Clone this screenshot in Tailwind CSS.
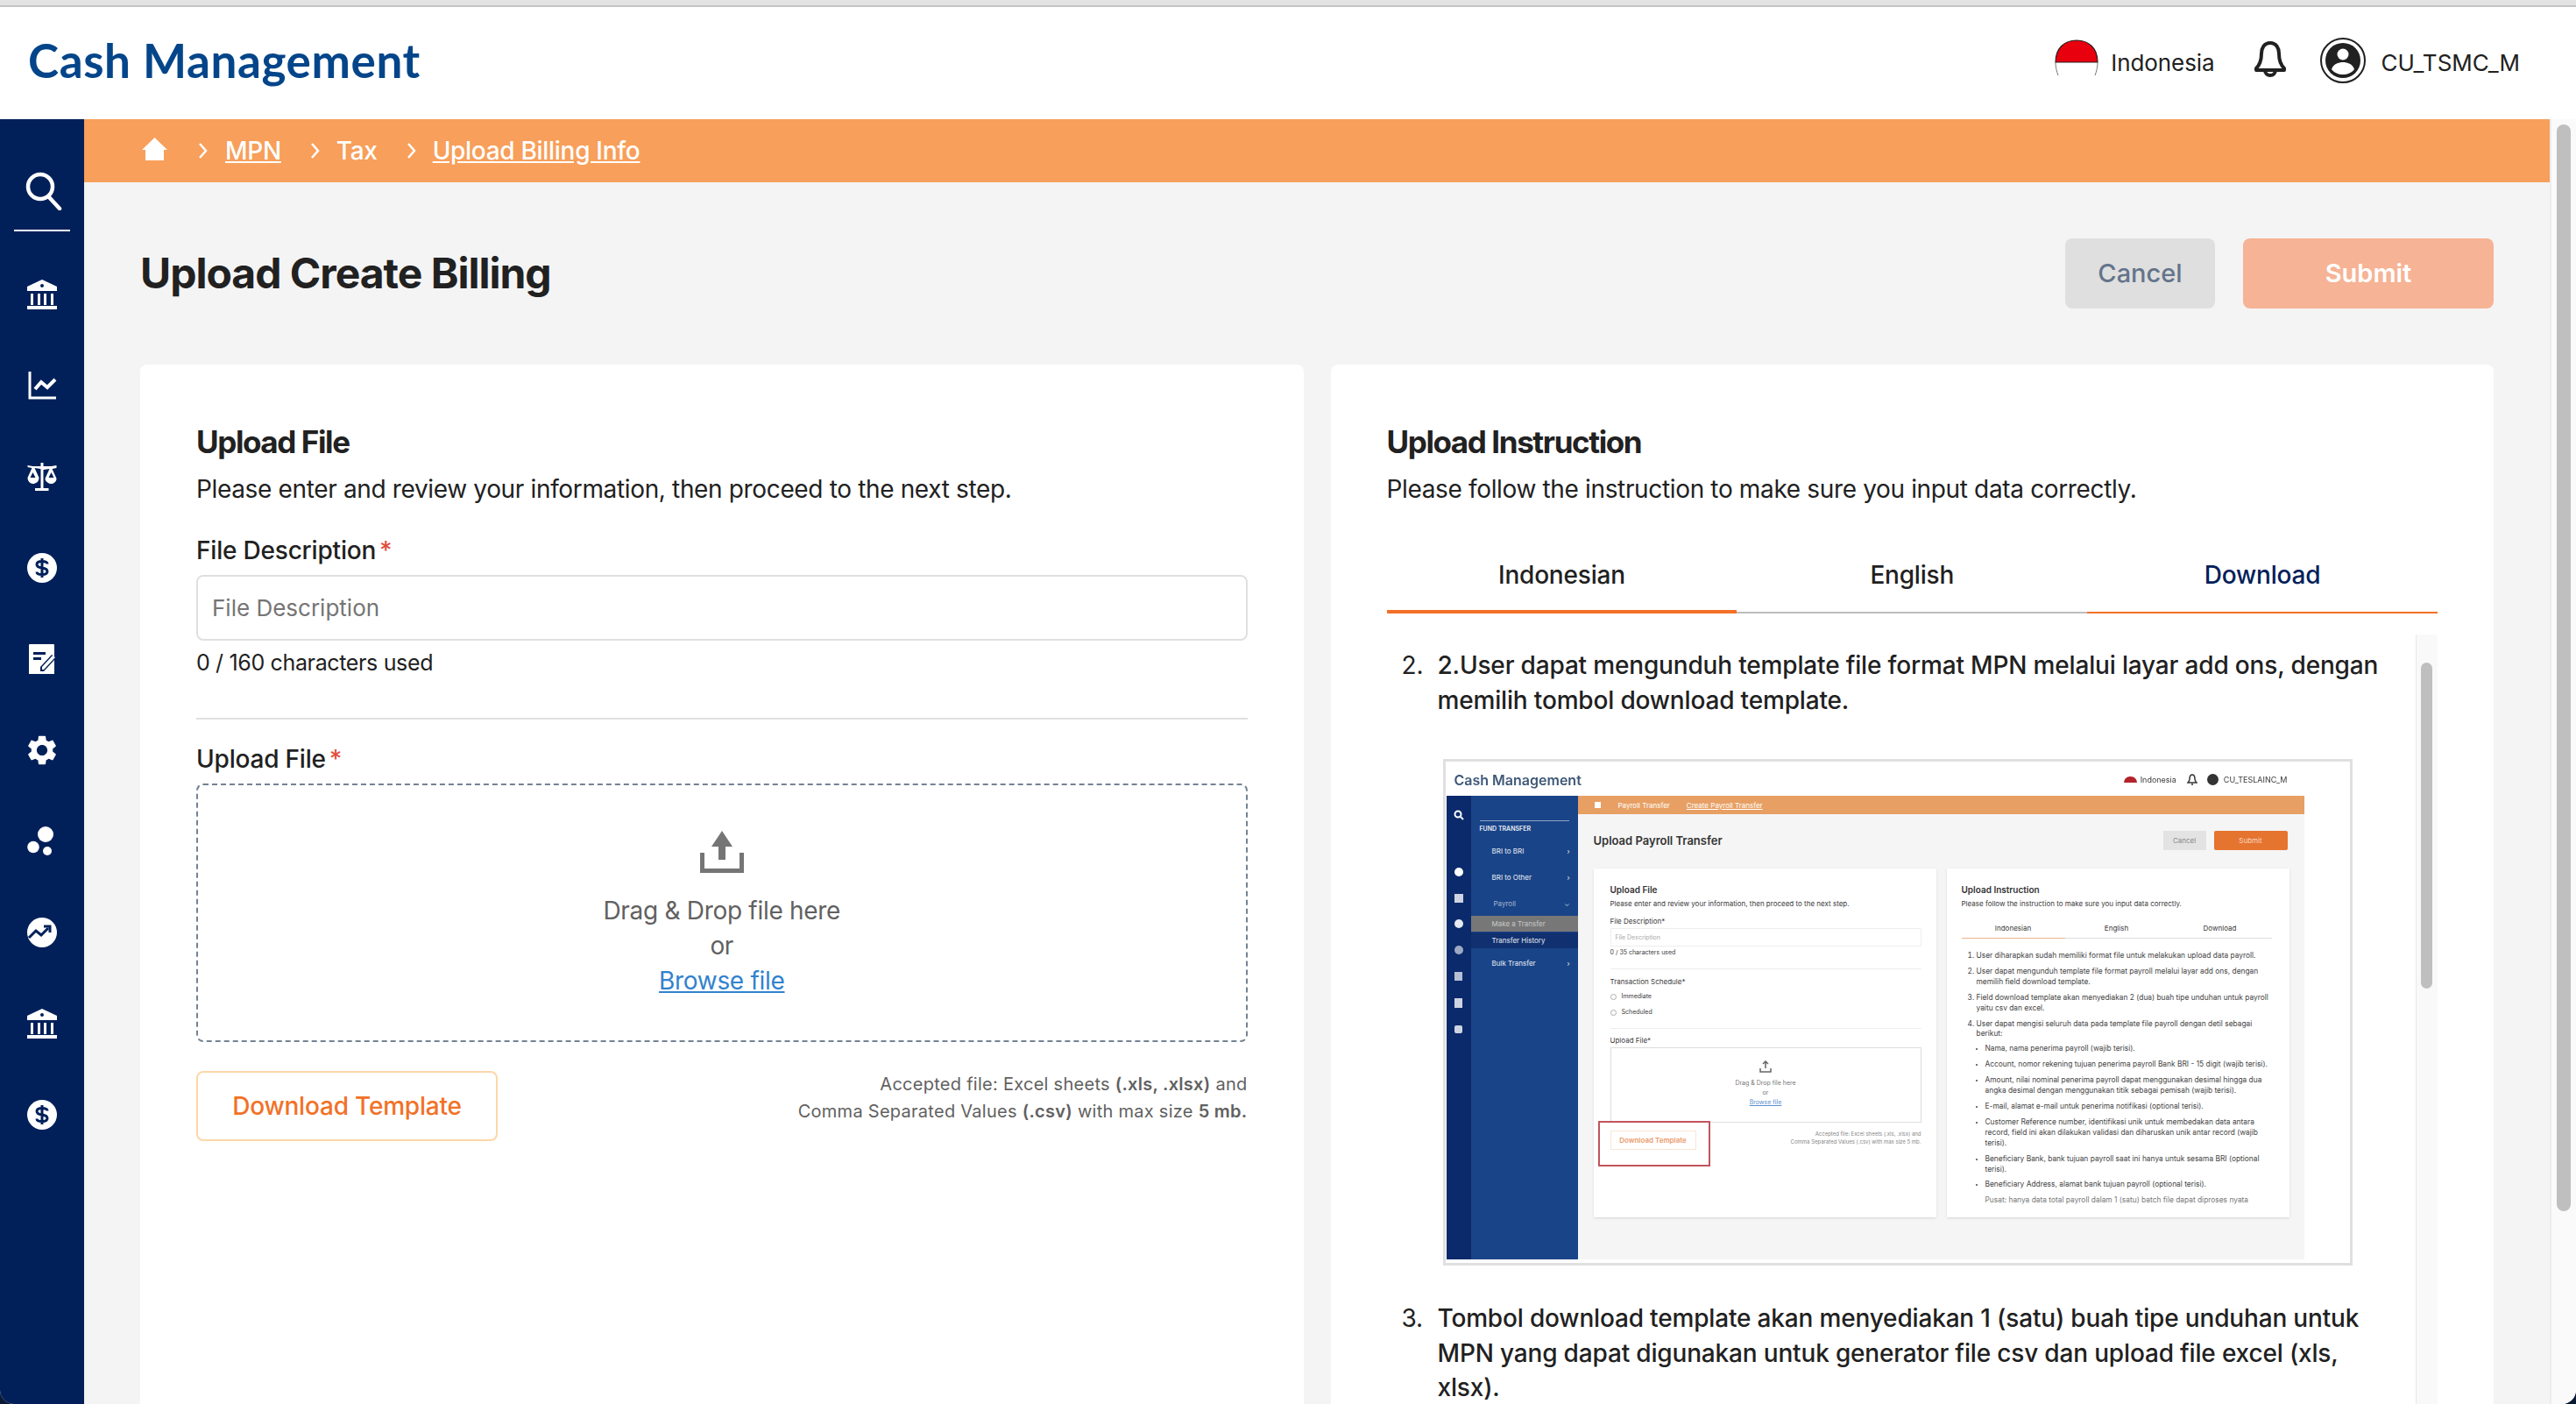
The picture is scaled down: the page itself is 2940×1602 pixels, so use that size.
<!DOCTYPE html>
<html lang="id">
<head>
<meta charset="UTF-8">
<title>Upload Create Billing</title>
<script src="https://cdn.jsdelivr.net/npm/@tailwindcss/browser@4"></script>
</head>
<body class="h-[1602px] overflow-hidden bg-[#0b1a33] [font-family:Inter,sans-serif] text-[#212121]">
<div class="h-[1602px] flex flex-col overflow-hidden rounded-b-[16px] bg-white">
  <!-- browser strip -->
  <div class="h-[8px] bg-[#e3e3e3] border-b-2 border-[#c4c4c4]"></div>

  <!-- header -->
  <header class="h-[128px] bg-white flex items-center pl-[32px] pr-[64px]">
    <div class="[font-family:Lato,sans-serif] text-[53px] font-bold text-[#04458a] leading-none -mt-[8px] tracking-[0.6px]">Cash Management</div>
    <div class="ml-auto flex items-center -mt-[2px]">
      <svg width="50" height="42" viewBox="0 0 50 42" class="-mt-[10px]"><path d="M1 26C1 10 11 1 25 1s24 9 24 25z" fill="#e8000f" stroke="#222" stroke-width="1.2"/><path d="M1 26c0 5 1 10 3 15M49 26c0 5-1 10-3 15" fill="none" stroke="#777" stroke-width="1"/></svg>
      <span class="text-[26px] ml-[14px] tracking-[-0.1px]">Indonesia</span>
      <svg width="38" height="42" viewBox="0 0 38 42" class="ml-[45px] -mt-[8px]" fill="none" stroke="#212121" stroke-width="4" stroke-linejoin="round"><path d="M19 3c-7 0-10 6-10 12 0 8-2 13-6 17v2h32v-2c-4-4-6-9-6-17 0-6-3-12-10-12z"/><path d="M13 34c0 4 3 6 6 6s6-2 6-6"/></svg>
      <svg width="52" height="52" viewBox="0 0 52 52" class="ml-[38px] -mt-[4px]"><circle cx="26" cy="26" r="25" fill="none" stroke="#212121" stroke-width="2"/><circle cx="26" cy="26" r="20" fill="#212121"/><circle cx="26" cy="19" r="6.5" fill="#fff"/><path d="M13 36c2-6 8-8 13-8s11 2 13 8c-3 4-8 6-13 6s-10-2-13-6z" fill="#fff"/></svg>
      <span class="text-[26px] ml-[17px]">CU_TSMC_M</span>
    </div>
  </header>

  <div class="flex-1 flex min-h-0">
    <!-- sidebar -->
    <aside class="w-[96px] shrink-0 bg-[#012059] flex flex-col items-center pt-[60px]">
      <svg width="44" height="44" viewBox="0 0 44 44" fill="none" stroke="#fff" stroke-width="4.5" stroke-linecap="round" class="ml-[5px]"><circle cx="17" cy="17" r="14"/><path d="M27 29l12 13"/></svg>
      <div class="w-[64px] h-[2px] bg-white mt-[22px] mb-[55px]"></div>
      <div class="flex flex-col gap-[70px]">
        <svg width="34" height="34" viewBox="0 0 34 34" fill="#fff"><path fill-rule="evenodd" d="M17 0L34 8v5H0V8zM17 5a2 2 0 100 4 2 2 0 000-4z"/><path d="M4 16h3v13H4zM12 16h3v13h-3zM19 16h3v13h-3zM27 16h3v13h-3zM0 30h34v4H0z"/></svg>
        <svg width="34" height="34" viewBox="0 0 34 34" fill="none" stroke="#fff"><path d="M3 1v30h30" stroke-width="3"/><path d="M9 21l7-8 7 6 9-9" stroke-width="4"/></svg>
        <svg width="34" height="34" viewBox="0 0 34 34"><path d="M15.500 1h3v4l9 0 6-1v3l-5 1 5 11c0 4-4 6-6 6s-7-2-7-6l5-11-7 1v21h6v3H9v-3h6.500V8l-7-1 5 11c0 5-4 7-7 7s-6-3-6-7l5-11-5-1V4l6 1 9 0z" fill="#fff"/><path d="M6.500 12l-3 6h6zM27.500 12l-3 6h6z" fill="#012059"/></svg>
        <svg width="34" height="34" viewBox="0 0 34 34"><circle cx="17" cy="17" r="17" fill="#fff"/><path d="M23 12.500c0-2-2-3-6-3s-6 1-6 3.500 2 3.500 6 4 6 1.500 6 4-2 3.500-6 3.500-6-1-6-3M17 6v22" fill="none" stroke="#012059" stroke-width="3"/></svg>
        <svg width="34" height="34" viewBox="0 0 34 34"><path d="M3 0h27a1 1 0 011 1v34H3a1 1 0 01-1-1V1a1 1 0 011-1z" fill="#fff"/><path d="M7 9h14v3H7zM7 15h9v3H7z" fill="#012059"/><path d="M15 31v-5L28 12l5 4-14 15z" fill="#012059"/><path d="M17 29v-3L29 13l3 2-13 14z" fill="#fff"/></svg>
        <svg width="34" height="34" viewBox="2.400 2 19.200 20" fill="#fff"><path d="M19.140 12.940c.04-.3.06-.61.06-.94 0-.32-.02-.64-.07-.94l2.030-1.580c.18-.14.23-.41.12-.61l-1.920-3.320c-.12-.22-.37-.29-.59-.22l-2.390.96c-.5-.38-1.030-.7-1.620-.94l-.36-2.540c-.04-.24-.24-.41-.48-.41h-3.840c-.24 0-.43.17-.47.41l-.36 2.540c-.59.24-1.130.57-1.620.94l-2.390-.96c-.22-.08-.47 0-.59.22L2.740 8.870c-.12.21-.08.47.12.61l2.030 1.580c-.05.3-.09.63-.09.94s.02.64.07.94l-2.030 1.580c-.18.14-.23.41-.12.61l1.920 3.320c.12.22.37.29.59.22l2.390-.96c.5.38 1.030.7 1.620.94l.36 2.540c.05.24.24.41.48.41h3.840c.24 0 .44-.17.47-.41l.36-2.540c.59-.24 1.130-.56 1.620-.94l2.390.96c.22.08.47 0 .59-.22l1.920-3.320c.12-.22.07-.47-.12-.61l-2.010-1.580zM12 15.600c-1.980 0-3.600-1.620-3.600-3.600s1.620-3.600 3.600-3.600 3.600 1.620 3.600 3.600-1.620 3.600-3.600 3.600z"/></svg>
        <svg width="34" height="34" viewBox="0 0 34 34" fill="#fff"><circle cx="21" cy="9" r="9"/><circle cx="7" cy="23.500" r="6.800"/><circle cx="23" cy="28" r="5"/></svg>
        <svg width="34" height="34" viewBox="0 0 34 34"><circle cx="17" cy="17" r="17" fill="#fff"/><path d="M2 23l8-8 6 5 8-8" fill="none" stroke="#012059" stroke-width="3"/><path d="M19 10h7v7" fill="none" stroke="#012059" stroke-width="3"/></svg>
        <svg width="34" height="34" viewBox="0 0 34 34" fill="#fff"><path fill-rule="evenodd" d="M17 0L34 8v5H0V8zM17 5a2 2 0 100 4 2 2 0 000-4z"/><path d="M4 16h3v13H4zM12 16h3v13h-3zM19 16h3v13h-3zM27 16h3v13h-3zM0 30h34v4H0z"/></svg>
        <svg width="34" height="34" viewBox="0 0 34 34"><circle cx="17" cy="17" r="17" fill="#fff"/><path d="M23 12.500c0-2-2-3-6-3s-6 1-6 3.500 2 3.500 6 4 6 1.500 6 4-2 3.500-6 3.500-6-1-6-3M17 6v22" fill="none" stroke="#012059" stroke-width="3"/></svg>
      </div>
    </aside>

    <!-- main -->
    <main class="w-[2814px] shrink-0 bg-[#f4f4f4] flex flex-col min-h-0">
      <nav class="h-[72px] shrink-0 bg-[#f79f5b] flex items-center pl-[66px] text-white text-[28px] font-medium tracking-[-0.3px]">
        <svg width="29" height="26" viewBox="0 0 29 26" fill="#fff" class="-mt-[4px]"><path d="M14.500 0L29 14h-4v12H4V14H0z"/></svg>
        <svg width="12" height="20" viewBox="0 0 12 20" fill="none" stroke="#fff" stroke-width="2.500" class="ml-[35px]"><path d="M2 2l7 8-7 8"/></svg>
        <a class="underline ml-[19px]">MPN</a>
        <svg width="12" height="20" viewBox="0 0 12 20" fill="none" stroke="#fff" stroke-width="2.500" class="ml-[33px]"><path d="M2 2l7 8-7 8"/></svg>
        <span class="ml-[18px]">Tax</span>
        <svg width="12" height="20" viewBox="0 0 12 20" fill="none" stroke="#fff" stroke-width="2.500" class="ml-[33px]"><path d="M2 2l7 8-7 8"/></svg>
        <a class="underline ml-[18px]">Upload Billing Info</a>
      </nav>

      <div class="px-[64px] pt-[64px] flex-1 flex flex-col min-h-0">
        <div class="flex items-center h-[80px] shrink-0">
          <h1 class="text-[48px] font-bold text-[#212121] tracking-[-1px]">Upload Create Billing</h1>
          <button class="ml-auto w-[171px] h-[80px] rounded-[8px] bg-[#dfdfdf] text-[#64748b] text-[29px] font-medium">Cancel</button>
          <button class="ml-[32px] w-[286px] h-[80px] rounded-[8px] bg-[#f6b395] text-white text-[29px] font-semibold">Submit</button>
        </div>

        <div class="grid grid-cols-2 gap-[31px] mt-[64px] flex-1 min-h-0">
          <!-- left card -->
          <section class="bg-white rounded-t-[8px] px-[64px] pt-[66px]">
            <h2 class="text-[35px] leading-[44px] font-bold tracking-[-1.4px]">Upload File</h2>
            <p class="text-[28px] leading-[40px] mt-[12px] tracking-[-0.35px]">Please enter and review your information, then proceed to the next step.</p>
            <label class="block text-[28px] leading-[40px] font-medium mt-[30px] tracking-[-0.2px]">File Description<span class="text-[#e04f3c] ml-[4px]">*</span></label>
            <div class="h-[75px] mt-[8px] border-2 border-[#e0e0e0] rounded-[8px] flex items-center px-[16px] text-[26px] text-[#757575]">File Description</div>
            <p class="text-[25px] leading-[36px] mt-[7px] tracking-[-0.35px]">0 / 160 characters used</p>
            <div class="h-[2px] bg-[#e0e0e0] mt-[45px]"></div>
            <label class="block text-[28px] leading-[40px] font-medium mt-[25px] tracking-[-0.2px]">Upload File<span class="text-[#e04f3c] ml-[4px]">*</span></label>
            <div class="h-[295px] mt-[8px] border-2 border-dashed border-[#748294] rounded-[8px] flex flex-col items-center pt-[52px] text-[28px] leading-[40px] text-[#616161] tracking-[-0.3px]">
              <svg width="50" height="48" viewBox="0 0 50 48" fill="#757575"><path d="M25 0l12 18h-8v15h-8V18h-8z"/><path d="M0 25h5v18h40V25h5v23H0z"/></svg>
              <p class="mt-[23px]">Drag &amp; Drop file here</p>
              <p>or</p>
              <a class="text-[#3182ce] underline">Browse file</a>
            </div>
            <div class="flex items-start justify-between mt-[33px]">
              <button class="w-[344px] h-[80px] border-2 border-[#fdd7a8] rounded-[8px] text-[#f27127] text-[28px] font-medium tracking-[-0.2px]">Download Template</button>
              <p class="text-right text-[#616161] text-[20px] leading-[31px] tracking-[0.27px]">Accepted file: Excel sheets <b class="font-semibold">(.xls, .xlsx)</b> and<br>Comma Separated Values <b class="font-semibold">(.csv)</b> with max size <b class="font-semibold">5 mb.</b></p>
            </div>
          </section>

          <!-- right card -->
          <section class="bg-white rounded-t-[8px] px-[64px] pt-[66px] flex flex-col min-h-0 overflow-hidden">
            <h2 class="text-[35px] leading-[44px] font-bold tracking-[-1.4px]">Upload Instruction</h2>
            <p class="text-[28px] leading-[40px] mt-[12px] tracking-[-0.35px]">Please follow the instruction to make sure you input data correctly.</p>
            <div class="grid grid-cols-3 mt-[36px] text-[28px] leading-[40px] font-medium text-center tracking-[-0.2px]">
              <div class="h-[86px] pt-[22px] border-b-4 border-[#f27127]">Indonesian</div>
              <div class="h-[86px] pt-[22px] border-b-2 border-[#bdbdbd]">English</div>
              <div class="h-[86px] pt-[22px] border-b-2 border-[#f27127] text-[#012059]">Download</div>
            </div>
            <div class="flex mt-[24px] flex-1 min-h-0">
              <div class="flex-1 min-w-0 pt-[16px] text-[28px] leading-[39.5px] font-medium tracking-[-0.17px]">
                <div class="flex pl-[17px] pr-[24px]">
                  <span class="w-[41px] shrink-0 font-normal">2.</span>
                  <p>2.User dapat mengunduh template file format MPN melalui layar add ons, dengan memilih tombol download template.</p>
                </div>

                <!-- embedded screenshot -->
                <div class="ml-[64px] mt-[47px] w-[1038px] h-[578px] border-[3px] border-[#e0e0e0] bg-white font-normal overflow-hidden tracking-normal">
                  <div class="w-[979px] h-[566px] mt-[2px] ml-[1px] flex flex-col blur-[0.7px] text-[9px] leading-[12px] text-[#3a3a3a]">
                    <div class="h-[37px] shrink-0 flex items-center pl-[9px] pr-[19px]">
                      <span class="text-[16px] font-semibold text-[#3f5878]">Cash Management</span>
                      <span class="ml-auto w-[15px] h-[7px] rounded-t-full bg-[#b3232b]"></span>
                      <span class="ml-[4px]">Indonesia</span>
                      <svg width="12" height="13" viewBox="0 0 12 13" class="ml-[12px]" fill="none" stroke="#333" stroke-width="1.500"><path d="M6 1C3 1 3 4 3 6c0 2-1 3-2 4h10c-1-1-2-2-2-4s0-5-3-5zM5 12h2"/></svg>
                      <span class="ml-[11px] w-[13px] h-[13px] rounded-full bg-[#333]"></span>
                      <span class="ml-[6px]">CU_TESLAINC_M</span>
                    </div>
                    <div class="flex-1 flex min-h-0">
                      <div class="w-[28px] shrink-0 bg-[#0a2a6b] flex flex-col items-center pt-[16px]">
                        <svg width="12" height="12" viewBox="0 0 12 12" fill="none" stroke="#fff" stroke-width="2"><circle cx="5" cy="5" r="3.500"/><path d="M8 8l3 3"/></svg>
                        <span class="w-[10px] h-[10px] rounded-full bg-white mt-[54px]"></span>
                        <span class="w-[10px] h-[10px] bg-white/80 mt-[20px]"></span>
                        <span class="w-[10px] h-[10px] rounded-full bg-white/90 mt-[19px]"></span>
                        <span class="w-[10px] h-[10px] rounded-full bg-white/60 mt-[20px]"></span>
                        <span class="w-[9px] h-[10px] bg-white/70 mt-[20px]"></span>
                        <span class="w-[9px] h-[11px] bg-white/80 mt-[20px]"></span>
                        <span class="w-[9px] h-[9px] rounded-[2px] bg-white/80 mt-[20px]"></span>
                      </div>
                      <div class="w-[122px] shrink-0 bg-[#1a4488] text-white/90 text-[8px] pt-[28px]">
                        <div class="mx-[10px] h-[1px] bg-white/50"></div>
                        <div class="mx-[10px] mt-[4px] text-[7px] leading-[9px] font-semibold">FUND TRANSFER</div>
                        <div class="flex items-center ml-[24px] mr-[9px] mt-[15px]"><span>BRI to BRI</span><span class="ml-auto">›</span></div>
                        <div class="flex items-center ml-[24px] mr-[9px] mt-[18px]"><span>BRI to Other</span><span class="ml-auto">›</span></div>
                        <div class="flex items-center ml-[26px] mr-[9px] mt-[18px] text-white/60"><span>Payroll</span><span class="ml-auto">⌄</span></div>
                        <div class="h-[18px] mt-[8px] bg-[#777] pl-[24px] flex items-center text-white/60">Make a Transfer</div>
                        <div class="h-[18px] mt-[1px] bg-[#10306f] pl-[24px] flex items-center">Transfer History</div>
                        <div class="flex items-center ml-[24px] mr-[9px] mt-[11px]"><span>Bulk Transfer</span><span class="ml-auto">›</span></div>
                      </div>
                      <div class="flex-1 bg-[#f5f5f5] flex flex-col min-w-0">
                        <div class="h-[21px] shrink-0 bg-[#e79f63] flex items-center pl-[19px] text-white text-[8px]">
                          <span class="w-[7px] h-[7px] bg-white"></span>
                          <span class="ml-[20px]">Payroll Transfer</span>
                          <span class="ml-[19px] underline">Create Payroll Transfer</span>
                        </div>
                        <div class="flex items-center h-[22px] mt-[19px] pl-[18px] pr-[19px] shrink-0">
                          <span class="text-[13px] font-semibold text-[#333]">Upload Payroll Transfer</span>
                          <span class="ml-auto w-[49px] h-[22px] bg-[#e3e3e3] text-[#888] text-[8px] flex items-center justify-center">Cancel</span>
                          <span class="ml-[9px] w-[84px] h-[22px] bg-[#e5742f] text-[#fbd8c0] text-[8px] flex items-center justify-center rounded-[2px]">Submit</span>
                        </div>
                        <div class="flex gap-[12px] mt-[21px] pl-[18px] pr-[19px]">
                          <div class="w-[391px] h-[398px] shrink-0 bg-white shadow-sm pt-[18px] pl-[19px] pr-[17px] relative">
                            <div class="text-[10px] font-semibold text-[#333]">Upload File</div>
                            <div class="mt-[4px] text-[8px]">Please enter and review your information, then proceed to the next step.</div>
                            <div class="mt-[8px] text-[8px]">File Description*</div>
                            <div class="h-[21px] mt-[2px] border border-[#eee] pl-[5px] text-[7px] leading-[19px] text-[#aaa]">File Description</div>
                            <div class="mt-[1px] text-[7px]">0 / 35 characters used</div>
                            <div class="h-[1px] bg-[#eee] mt-[12px]"></div>
                            <div class="mt-[8px] text-[8px]">Transaction Schedule*</div>
                            <div class="flex items-center gap-[6px] mt-[5px] text-[7px]"><span class="w-[7px] h-[7px] rounded-full border border-[#aaa]"></span>Immediate</div>
                            <div class="flex items-center gap-[6px] mt-[6px] text-[7px]"><span class="w-[7px] h-[7px] rounded-full border border-[#aaa]"></span>Scheduled</div>
                            <div class="h-[1px] bg-[#eee] mt-[12px]"></div>
                            <div class="mt-[7px] text-[8px]">Upload File*</div>
                            <div class="h-[86px] mt-[2px] border border-[#ddd] flex flex-col items-center pt-[14px] text-[7px] leading-[11px] text-[#777]">
                              <svg width="14" height="14" viewBox="0 0 14 14" fill="none" stroke="#666" stroke-width="1.500"><path d="M7 9V1M4 4l3-3 3 3M1 9v4h12V9"/></svg>
                              <span class="mt-[6px]">Drag &amp; Drop file here</span><span>or</span><span class="text-[#5b8fd0] underline">Browse file</span>
                            </div>
                            <div class="flex items-start justify-between mt-[9px]">
                              <div class="w-[98px] h-[22px] border border-[#f9e6d4] text-[#eb9a6b] text-[8px] font-semibold flex items-center justify-center">Download Template</div>
                              <div class="text-right text-[6px] leading-[9px] text-[#888] mt-[-1px]">Accepted file: Excel sheets (.xls, .xlsx) and<br>Comma Separated Values (.csv) with max size 5 mb.</div>
                            </div>
                            <div class="absolute left-[5px] top-[288px] w-[128px] h-[52px] border-[2px] border-[#c2555c]"></div>
                          </div>
                          <div class="w-[391px] h-[398px] shrink-0 bg-white shadow-sm pt-[18px] pl-[17px] pr-[10px] overflow-hidden">
                            <div class="text-[10px] font-semibold text-[#333]">Upload Instruction</div>
                            <div class="mt-[4px] text-[8px]">Please follow the instruction to make sure you input data correctly.</div>
                            <div class="grid grid-cols-3 mt-[10px] mr-[10px] text-center text-[8px] h-[24px] border-b border-[#ddd]"><span class="border-b border-[#e7b48c] h-[24px] pt-[6px]">Indonesian</span><span class="pt-[6px]">English</span><span class="pt-[6px]">Download</span></div>
                            <div class="h-[340px] overflow-hidden">
                            <ol class="mt-[14px] list-decimal pl-[17px] text-[8.400px] leading-[11.900px] text-[#444]">
                              <li class="mb-[6px]">User diharapkan sudah memiliki format file untuk melakukan upload data payroll.</li>
                              <li class="mb-[6px]">User dapat mengunduh template file format payroll melalui layar add ons, dengan memilih field download template.</li>
                              <li class="mb-[6px]">Field download template akan menyediakan 2 (dua) buah tipe unduhan untuk payroll yaitu csv dan excel.</li>
                              <li class="mb-[5px]">User dapat mengisi seluruh data pada template file payroll dengan detil sebagai berikut:
                                <ul class="pl-[10px] mt-[5px] list-disc marker:text-[6px]">
                                  <li class="mb-[6px]">Nama, nama penerima payroll (wajib terisi).</li>
                                  <li class="mb-[6px]">Account, nomor rekening tujuan penerima payroll Bank BRI - 15 digit (wajib terisi).</li>
                                  <li class="mb-[6px]">Amount, nilai nominal penerima payroll dapat menggunakan desimal hingga dua angka desimal dengan menggunakan titik sebagai pemisah (wajib terisi).</li>
                                  <li class="mb-[6px]">E-mail, alamat e-mail untuk penerima notifikasi (optional terisi).</li>
                                  <li class="mb-[6px]">Customer Reference number, identifikasi unik untuk membedakan data antara record, field ini akan dilakukan validasi dan diharuskan unik antar record (wajib terisi).</li>
                                  <li class="mb-[6px]">Beneficiary Bank, bank tujuan payroll saat ini hanya untuk sesama BRI (optional terisi).</li>
                                  <li class="mb-[6px]">Beneficiary Address, alamat bank tujuan payroll (optional terisi).</li>
                                  <li class="list-none text-[#777]">Pusat: hanya data total payroll dalam 1 (satu) batch file dapat diproses nyata</li>
                                </ul>
                              </li>
                            </ol>
                            </div>
                          </div>
                        </div>
                      </div>
                    </div>
                  </div>
                </div>

                <div class="flex pl-[17px] pr-[24px] mt-[41px]">
                  <span class="w-[41px] shrink-0 font-normal">3.</span>
                  <p>Tombol download template akan menyediakan 1 (satu) buah tipe unduhan untuk MPN yang dapat digunakan untuk generator file csv dan upload file excel (xls, xlsx).</p>
                </div>
              </div>
              <!-- inner scrollbar -->
              <div class="w-[25px] shrink-0 bg-[#f9f9f9] border-l border-[#e8e8e8] pt-[32px] pl-[5px]">
                <div class="w-[13px] h-[372px] rounded-full bg-[#bfbfbf]"></div>
              </div>
            </div>
          </section>
        </div>
      </div>
    </main>

    <!-- page scrollbar -->
    <div class="w-[30px] shrink-0 bg-[#fafafa] border-l-2 border-[#ececec] pt-[6px] pl-[6px]">
      <div class="w-[16px] h-[1240px] rounded-full bg-[#bfbfbf]"></div>
    </div>
  </div>
</div>
</body>
</html>
